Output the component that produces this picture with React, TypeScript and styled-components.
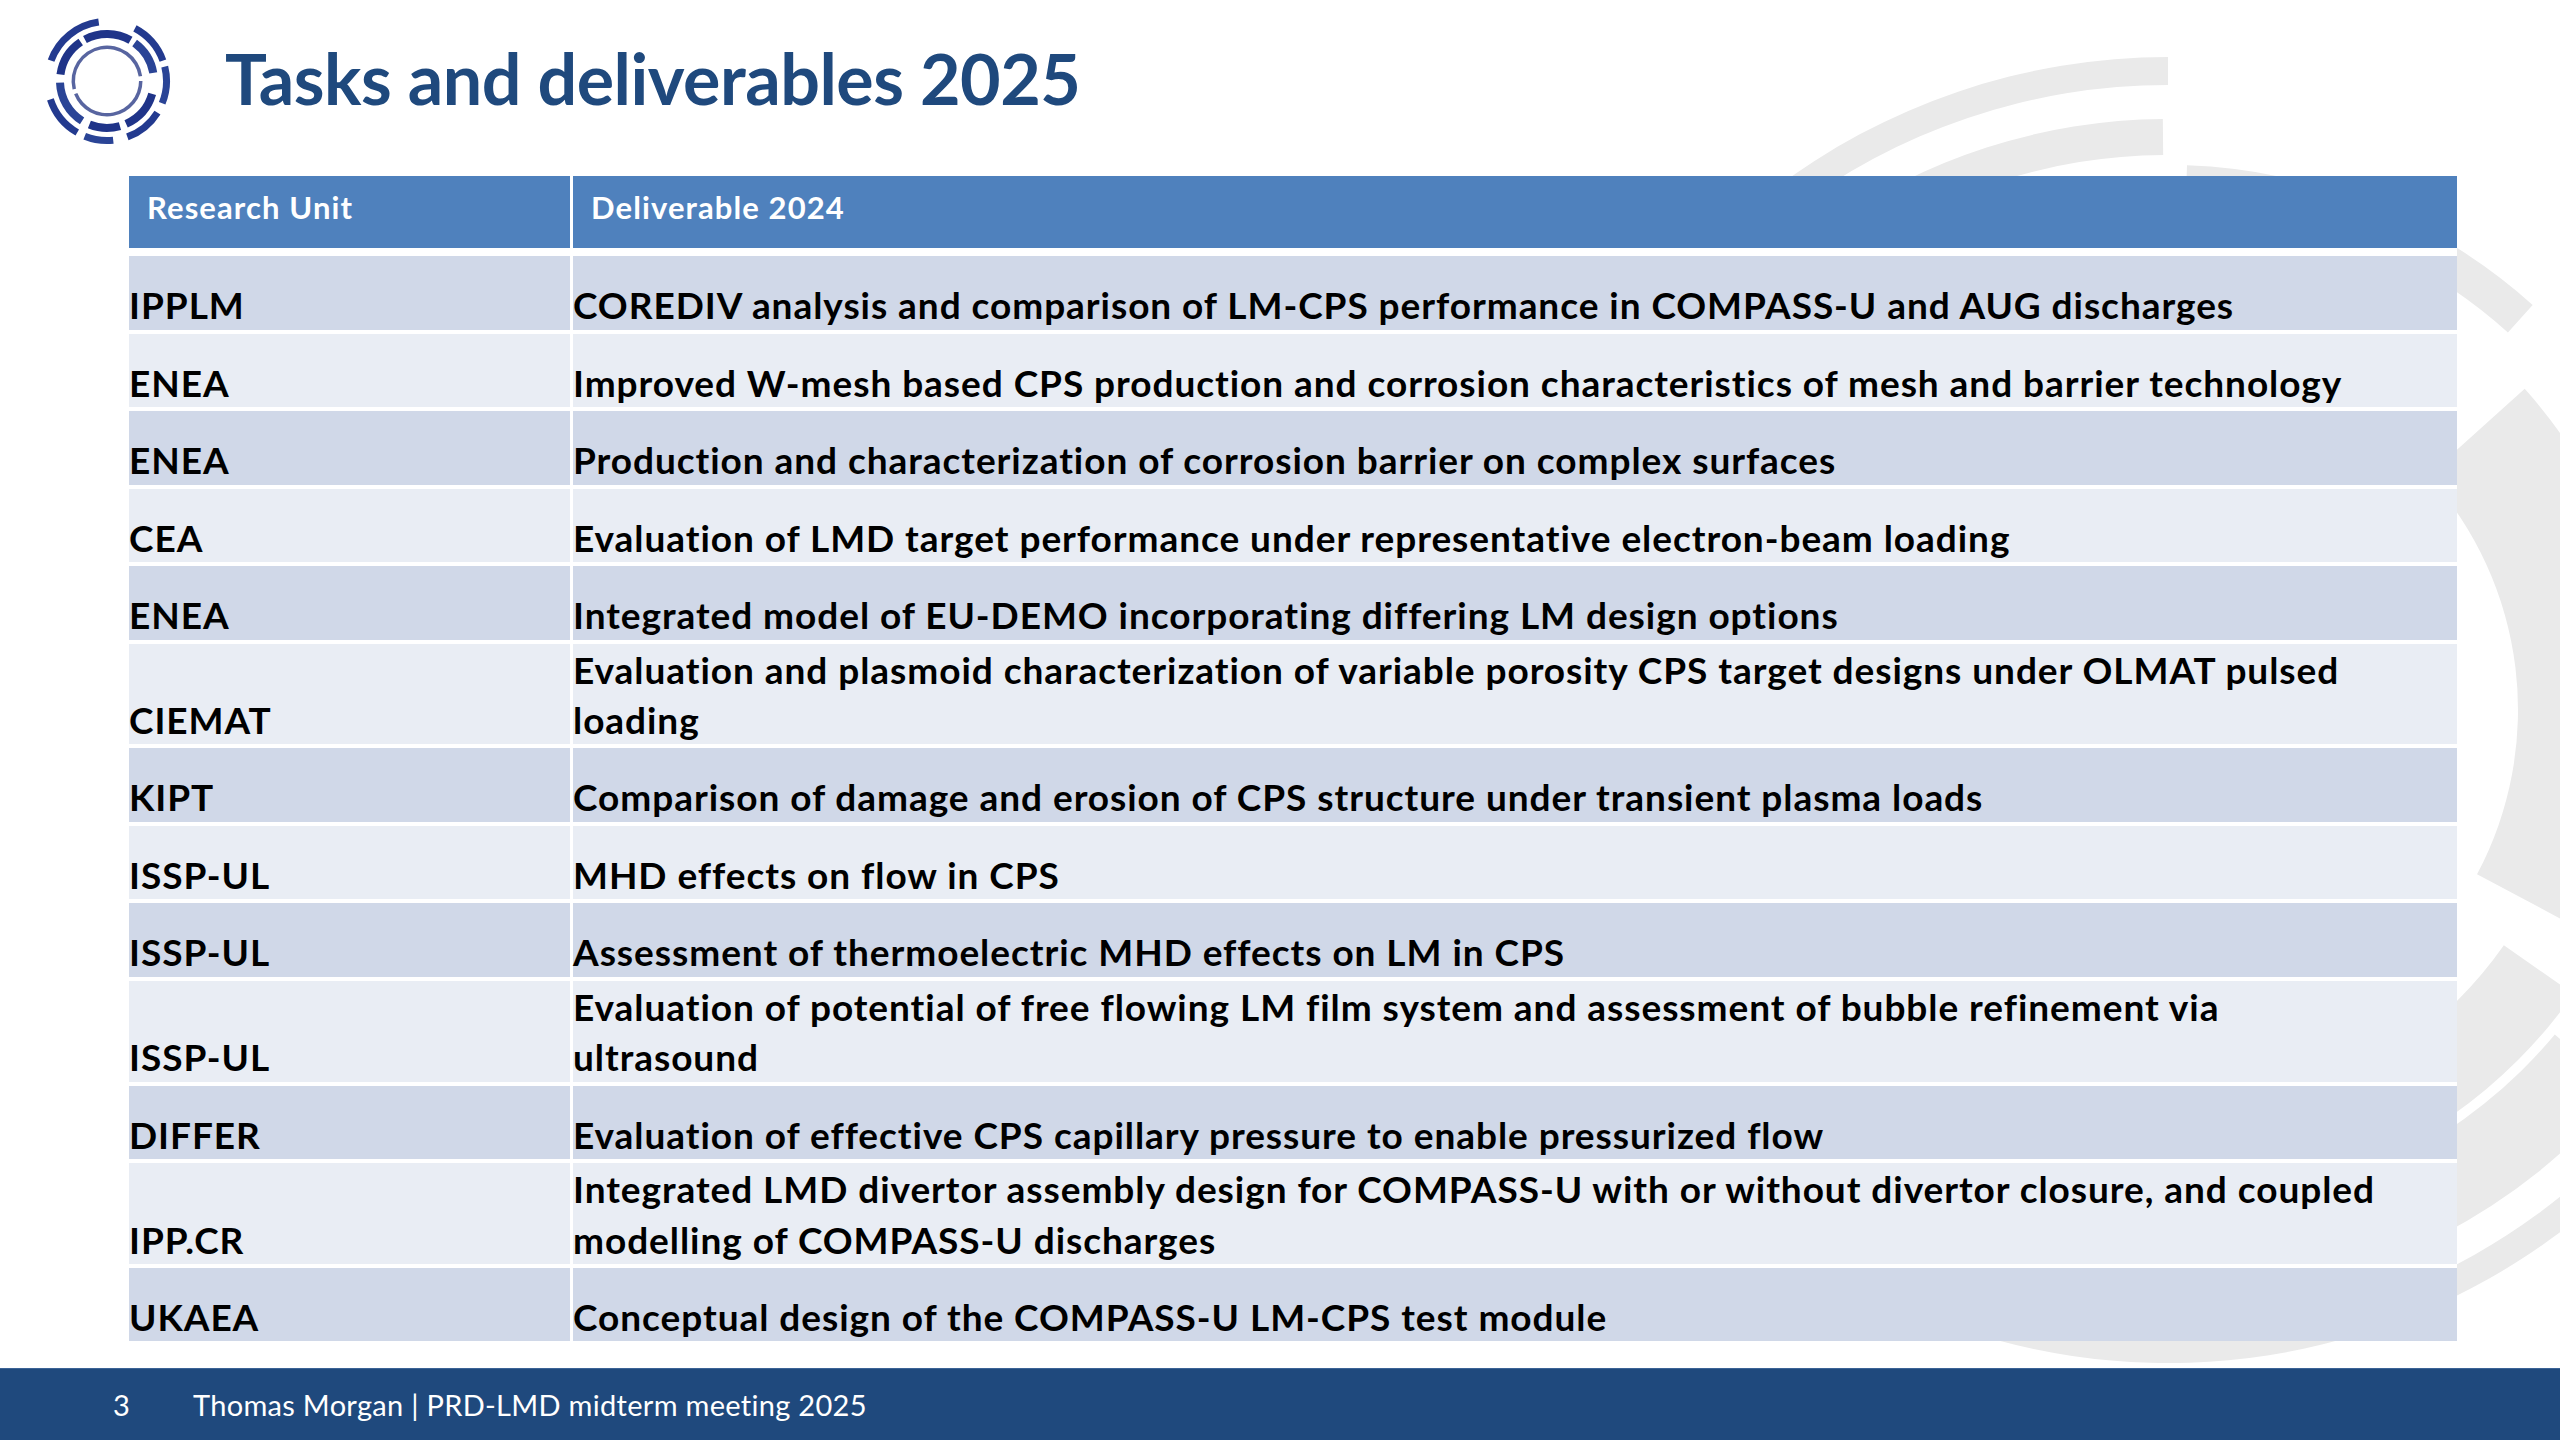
import React from "react";
import styled, { createGlobalStyle } from "styled-components";

const GlobalStyle = createGlobalStyle`
  html, body { margin: 0; padding: 0; background: #ffffff; }
  body { width: 2560px; height: 1440px; overflow: hidden; font-family: "Lato", "Open Sans", sans-serif; }
`;

const rad = (d: number) => (d * Math.PI) / 180;
const sector = (cx: number, cy: number, r0: number, r1: number, a0: number, a1: number) => {
  const p = (r: number, a: number) => [cx + r * Math.cos(rad(a)), cy + r * Math.sin(rad(a))];
  const large = a1 - a0 > 180 ? 1 : 0;
  const [x0, y0] = p(r1, a0);
  const [x1, y1] = p(r1, a1);
  const [x2, y2] = p(r0, a1);
  const [x3, y3] = p(r0, a0);
  return `M${x0.toFixed(2)} ${y0.toFixed(2)} A${r1} ${r1} 0 ${large} 1 ${x1.toFixed(2)} ${y1.toFixed(2)} L${x2.toFixed(2)} ${y2.toFixed(2)} A${r0} ${r0} 0 ${large} 0 ${x3.toFixed(2)} ${y3.toFixed(2)} Z`;
};

const Slide = styled.div`
  position: relative;
  width: 2560px;
  height: 1440px;
  display: flex;
  flex-direction: column;
  background: #ffffff;
  overflow: hidden;
`;

const Watermark = styled.svg`
  position: absolute;
  left: 0;
  top: 0;
  width: 2560px;
  height: 1440px;
  z-index: 0;
`;

const TitleBar = styled.header`
  position: relative;
  z-index: 1;
  height: 160px;
  display: flex;
  align-items: center;
  padding-left: 42px;
  gap: 53px;
  box-sizing: border-box;
`;

const Logo = styled.svg`
  width: 130px;
  height: 134px;
  flex: none;
  margin-top: 2px;
`;

const Title = styled.h1`
  margin: 0 0 4px 0;
  font-family: "Lato", "Open Sans", sans-serif;
  font-weight: 700;
  font-size: 70px;
  letter-spacing: -0.5px;
  color: #1f497d;
  line-height: 1;
`;

const Table = styled.section`
  position: relative;
  z-index: 1;
  margin: 16px 0 0 129px;
  width: 2328px;
  background: #ffffff;
  display: flex;
  flex-direction: column;
  gap: 8px;
`;

const HeadRow = styled.div`
  display: grid;
  grid-template-columns: 441px 1fr;
  column-gap: 3px;
  height: 72px;
`;

const HeadCell = styled.div`
  background: #4f81bd;
  color: #ffffff;
  font-weight: 700;
  font-size: 31px;
  letter-spacing: 1.1px;
  line-height: 34px;
  padding: 14px 18px 0 18px;
  box-sizing: border-box;
`;

const Body = styled.div`
  display: grid;
  grid-template-columns: 441px 1fr;
  column-gap: 3px;
  row-gap: 4px;
`;

const Cell = styled.div<{ $shade: boolean }>`
  background: ${(p) => (p.$shade ? "#d0d8e8" : "#e9edf4")};
  min-height: 73.5px;
  display: flex;
  align-items: flex-end;
  font-weight: 700;
  font-size: 37px;
  letter-spacing: 0.95px;
  line-height: 50.4px;
  color: #000000;
  padding-right: 64px;
  box-sizing: border-box;
`;

const CellText = styled.span`
  position: relative;
  top: 1px;
`;

const Footer = styled.footer`
  position: relative;
  z-index: 1;
  margin-top: auto;
  height: 72px;
  background: #1f497d;
  border-top: 1px solid #3c6396;
  display: flex;
  align-items: center;
  color: #ffffff;
  font-family: "Lato", "Open Sans", sans-serif;
  font-size: 29px;
  letter-spacing: 0.3px;
  box-sizing: border-box;
`;

const PageNum = styled.span`
  width: 80px;
  padding-left: 113px;
`;

const FooterText = styled.span``;

const rows: [string, string][] = [
  ["IPPLM", "COREDIV analysis and comparison of LM-CPS performance in COMPASS-U and AUG discharges"],
  ["ENEA", "Improved W-mesh based CPS production and corrosion characteristics of mesh and barrier technology"],
  ["ENEA", "Production and characterization of corrosion barrier on complex surfaces"],
  ["CEA", "Evaluation of LMD target performance under representative electron-beam loading"],
  ["ENEA", "Integrated model of EU-DEMO incorporating differing LM design options"],
  ["CIEMAT", "Evaluation and plasmoid characterization of variable porosity CPS target designs under OLMAT pulsed loading"],
  ["KIPT", "Comparison of damage and erosion of CPS structure under transient plasma loads"],
  ["ISSP-UL", "MHD effects on flow in CPS"],
  ["ISSP-UL", "Assessment of thermoelectric MHD effects on LM in CPS"],
  ["ISSP-UL", "Evaluation of potential of free flowing LM film system and assessment of bubble refinement via ultrasound"],
  ["DIFFER", "Evaluation of effective CPS capillary pressure to enable pressurized flow"],
  ["IPP.CR", "Integrated LMD divertor assembly design for COMPASS-U with or without divertor closure, and coupled modelling of COMPASS-U discharges"],
  ["UKAEA", "Conceptual design of the COMPASS-U LM-CPS test module"],
];

const watermarkSegs: [number, number, number, number][] = [
  [625, 653, 195, 270],
  [625, 653, 40, 150],
  [555, 591, 200, 269.5],
  [508, 545, 272, 312],
  [350, 480, 318, 388],
  [410, 495, 35, 115],
  [505, 592, 40, 130],
];

const logoSegs: [number, number, number, number, string][] = [
  [56, 63, 200, 262, "#233a8f"],
  [56, 63, 298, 340, "#233a8f"],
  [56, 63, 346, 22, "#2a4496"],
  [56, 63, 32, 70, "#233a8f"],
  [56, 63, 84, 112, "#2a4496"],
  [56, 63, 120, 162, "#233a8f"],
  [43, 51, 188, 236, "#1f3489"],
  [43, 51, 242, 300, "#1f3489"],
  [43, 51, 306, 350, "#2a4496"],
  [43, 51, 16, 66, "#1f3489"],
  [43, 51, 74, 112, "#1f3489"],
  [43, 51, 122, 178, "#2a4496"],
  [32, 35.5, 0, 158, "#5865a0"],
  [32, 35.5, 166, 352, "#5865a0"],
];

export default function App() {
  return (
    <>
      <GlobalStyle />
      <Slide>
        <Watermark viewBox="0 0 2560 1440">
          {watermarkSegs.map(([r0, r1, a0, a1], i) => (
            <path key={i} d={sector(2168, 710, r0, r1, a0, a1)} fill="#eaeaea" />
          ))}
        </Watermark>
        <TitleBar>
          <Logo viewBox="0 0 130 134">
            {logoSegs.map(([r0, r1, a0, a1, c], i) => {
              const end = a1 < a0 ? a1 + 360 : a1;
              return <path key={i} d={sector(65, 67, r0, r1, a0, end)} fill={c} />;
            })}
          </Logo>
          <Title>Tasks and deliverables 2025</Title>
        </TitleBar>
        <Table>
          <HeadRow>
            <HeadCell>Research Unit</HeadCell>
            <HeadCell>Deliverable 2024</HeadCell>
          </HeadRow>
          <Body>
            {rows.map(([unit, text], i) => (
              <React.Fragment key={i}>
                <Cell $shade={i % 2 === 0}>
                  <CellText>{unit}</CellText>
                </Cell>
                <Cell $shade={i % 2 === 0}>
                  <CellText>{text}</CellText>
                </Cell>
              </React.Fragment>
            ))}
          </Body>
        </Table>
        <Footer>
          <PageNum>3</PageNum>
          <FooterText>Thomas Morgan | PRD-LMD midterm meeting 2025</FooterText>
        </Footer>
      </Slide>
    </>
  );
}
